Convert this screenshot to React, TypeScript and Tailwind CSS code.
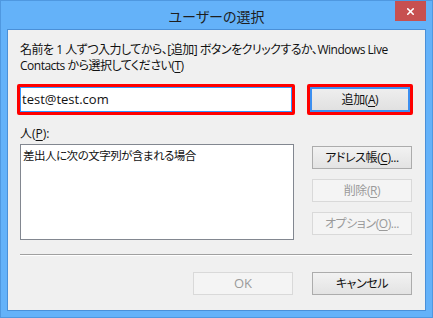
import { X } from "lucide-react";

const font = {
  fontFamily: '"Open Sans", "Noto Sans CJK JP", sans-serif',
};

type BtnProps = {
  children: React.ReactNode;
  disabled?: boolean;
  className?: string;
};

const Btn = ({ children, disabled, className = "" }: BtnProps) => (
  <button
    disabled={disabled}
    className={
      "flex items-center justify-center h-[23px] w-[100px] text-[12px] leading-none tracking-[-0.4px] border " +
      (disabled
        ? "bg-[#f4f4f4] border-[#d9d9d9] text-[#9a9a9a]"
        : "bg-gradient-to-b from-[#f2f2f2] to-[#e3e3e3] border-[#acacac] text-[#111]") +
      " " +
      className
    }
  >
    {children}
  </button>
);

export default function App() {
  return (
    <div
      style={font}
      className="w-[433px] h-[318px] bg-[#64b2f9] border border-[#4f98e0] flex flex-col text-[#111] [font-feature-settings:'palt']"
    >
      <div className="relative h-[28px] flex items-center justify-center pt-[3px]">
        <span className="text-[14px] text-[#1e1e1e]">ユーザーの選択</span>
        <div className="absolute right-[6px] top-0 w-[31px] h-[20px] bg-[#c75050] flex items-center justify-center">
          <X className="w-[11px] h-[11px] text-white" strokeWidth={3.4} />
        </div>
      </div>

      <div className="mx-[6px] h-[282px] border border-[#4a90d8] bg-[#f0f0f0] pl-[12px] pr-[12px] flex flex-col">
        <p className="mt-[12px] text-[12px] leading-[16px] tracking-[-0.5px] whitespace-nowrap">
          名前を 1 人ずつ入力してから、[追加] ボタンをクリックするか、Windows Live
          <br />
          Contacts から選択してください(<u className="underline-offset-2">T</u>)
        </p>

        <div className="mt-[10px] -ml-[3px] flex items-center gap-[12px]">
          <div className="w-[280px] h-[31px] border-[3px] border-[#ff0000] rounded-[2px]">
            <div className="h-full border border-[#3399ff] bg-white flex items-center pl-[1px] text-[13px]">
              test@test.com
            </div>
          </div>
          <div className="w-[107px] h-[31px] border-[3px] border-[#ff0000] rounded-[2px]">
            <div className="h-full border-[2px] border-[#3c8ff0] bg-gradient-to-b from-[#eeeeee] to-[#e1e1e1] flex items-center justify-center text-[12px] tracking-[-0.4px]">
              追加(<u className="underline-offset-2">A</u>)
            </div>
          </div>
        </div>

        <div className="mt-[11px] text-[12px] leading-[16px]">
          人(<u className="underline-offset-2">P</u>):
        </div>

        <div className="mt-[2px] flex">
          <div className="w-[274px] h-[96px] border border-[#828790] bg-white px-[2px] pt-[3px] text-[11.5px] tracking-[-0.5px] leading-[16px]">
            差出人に次の文字列が含まれる場合
          </div>
          <div className="ml-[18px] mt-[2px] flex flex-col gap-[10px]">
            <Btn>
              アドレス帳(<u className="underline-offset-2">C</u>)...
            </Btn>
            <Btn disabled>
              削除(<u className="underline-offset-2">R</u>)
            </Btn>
            <Btn disabled>
              オプション(<u className="underline-offset-2">O</u>)...
            </Btn>
          </div>
        </div>

        <div className="mt-[14px] w-[392px] border-t border-[#a0a0a0] border-b border-b-white" />

        <div className="mt-[16px] flex justify-end gap-[19px] pr-[1px]">
          <Btn disabled className="text-[13px] tracking-normal">
            OK
          </Btn>
          <Btn>キャンセル</Btn>
        </div>
      </div>
    </div>
  );
}
